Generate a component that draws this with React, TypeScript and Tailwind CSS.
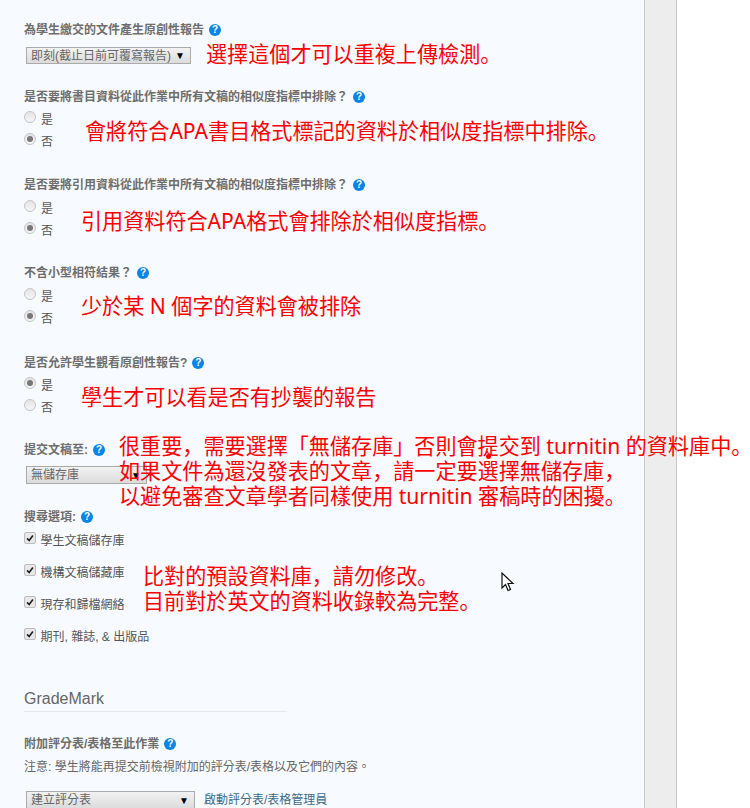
import React from "react";

const font = { fontFamily: '"Liberation Sans", "Noto Sans CJK TC", sans-serif' };
const noteFont = { fontFamily: '"Noto Sans", "Noto Sans CJK SC", sans-serif' };

function Help() {
  return (
    <span className="inline-flex h-3 w-3 shrink-0 items-center justify-center rounded-full bg-[#0a84e8] text-[10px] leading-none font-bold text-white">?</span>
  );
}

function Label({ children, className = "" }: { children: React.ReactNode; className?: string }) {
  return (
    <div className={"flex h-4 items-center gap-[5px] text-[12px] leading-4 font-bold text-[#6e6e6e] " + className}>
      <span>{children}</span>
      <Help />
    </div>
  );
}

function Radio({ text, on, className = "" }: { text: string; on?: boolean; className?: string }) {
  return (
    <div className={"flex h-4 items-center text-[12px] text-[#555] " + className}>
      <span className="flex h-3 w-3 items-center justify-center rounded-full border border-[#c4c4c4] bg-gradient-to-b from-[#e4e4e4] to-[#f6f6f6]">
        {on && <span className="h-1.5 w-1.5 rounded-full bg-[#777]" />}
      </span>
      <span className="ml-[5px] mt-[6px]">{text}</span>
    </div>
  );
}

function Check({ text, className = "" }: { text: string; className?: string }) {
  return (
    <div className={"flex h-4 items-center text-[12px] text-[#555] " + className}>
      <span className="flex h-3 w-3 items-center justify-center rounded-[2px] border border-[#bbb] bg-[#e8e8e8]">
        <svg viewBox="0 0 12 12" className="h-[10px] w-[10px]"><path d="M2.5 6.5 L5 9 L9.5 3" fill="none" stroke="#222" strokeWidth="2" /></svg>
      </span>
      <span className="ml-[4.5px] mt-[5px]">{text}</span>
    </div>
  );
}

function Select({ text, className }: { text: string; className: string }) {
  return (
    <div className={"ml-[2px] flex items-center justify-between border border-[#aaa] bg-gradient-to-b from-[#f2f2f2] to-[#dcdcdc] pl-[4px] pr-[5px] text-[12px] text-[#666] " + className}>
      <span>{text}</span>
      <span className="text-[10px] text-black">▼</span>
    </div>
  );
}

function Note({ children, className }: { children: React.ReactNode; className: string }) {
  return <div style={noteFont} className={"absolute whitespace-nowrap text-[21.1px] text-[#f00] " + className}>{children}</div>;
}

export default function App() {
  return (
    <div className="relative flex h-[808px] w-[750px] overflow-hidden bg-white" style={font}>
      <div className="h-full w-[644px] bg-[#f7fbff] pl-6 pt-[22px]">
        <Label>為學生繳交的文件產生原創性報告</Label>
        <Select text="即刻(截止日前可覆寫報告)" className="mt-[9px] h-[17px] w-[165px]" />

        <Label className="mt-[25px]">是否要將書目資料從此作業中所有文稿的相似度指標中排除？</Label>
        <Radio text="是" className="mt-[4px]" />
        <Radio text="否" on className="mt-[6px]" />

        <Label className="mt-[30px]">是否要將引用資料從此作業中所有文稿的相似度指標中排除？</Label>
        <Radio text="是" className="mt-[5px]" />
        <Radio text="否" on className="mt-[6px]" />

        <Label className="mt-[29px]">不含小型相符結果？</Label>
        <Radio text="是" className="mt-[5px]" />
        <Radio text="否" on className="mt-[6px]" />

        <Label className="mt-[31px]">是否允許學生觀看原創性報告?</Label>
        <Radio text="是" on className="mt-[4px]" />
        <Radio text="否" className="mt-[6px]" />

        <Label className="mt-[29px]">提交文稿至:</Label>
        <Select text="無儲存庫" className="mt-[8px] h-[18px] w-[121px]" />

        <Label className="mt-[25px]">搜尋選項:</Label>
        <Check text="學生文稿儲存庫" className="mt-[5px]" />
        <Check text="機構文稿儲藏庫" className="mt-4" />
        <Check text="現存和歸檔網絡" className="mt-4" />
        <Check text="期刊, 雜誌, & 出版品" className="mt-4" />

        <div className="mt-[46px] w-[263px] border-b border-[#e6e9ec] pb-[1px] text-[16px] leading-[22px] text-[#666]">GradeMark</div>

        <Label className="mt-6">附加評分表/表格至此作業</Label>
        <div className="mt-[7px] text-[12px] leading-4 text-[#666]">注意: 學生將能再提交前檢視附加的評分表/表格以及它們的內容。</div>
        <div className="mt-[16px] flex items-center">
          <Select text="建立評分表" className="h-[18px] w-[169px]" />
          <span className="ml-[9px] text-[12px] text-[#3a6a8c]">啟動評分表/表格管理員</span>
        </div>
      </div>
      <div className="h-full w-[33px] border-x border-[#c8c8c8] bg-[#ededed]" />

      <Note className="left-[206px] top-[39px] leading-[30px]">選擇這個才可以重複上傳檢測。</Note>
      <Note className="left-[85px] top-[116px] leading-[30px]">會將符合APA書目格式標記的資料於相似度指標中排除。</Note>
      <Note className="left-[81px] top-[206px] leading-[30px]">引用資料符合APA格式會排除於相似度指標。</Note>
      <Note className="left-[81px] top-[291px] leading-[30px]">少於某 N 個字的資料會被排除</Note>
      <Note className="left-[81px] top-[382px] leading-[30px]">學生才可以看是否有抄襲的報告</Note>
      <Note className="left-[119px] top-[433px] leading-[25px]">
        <div>很重要，需要選擇「無儲存庫」否則會提交到 turnitin 的資料庫中。</div>
        <div>如果文件為還沒發表的文章，請一定要選擇無儲存庫，</div>
        <div>以避免審查文章學者同樣使用 turnitin 審稿時的困擾。</div>
      </Note>
      <Note className="left-[143px] top-[563px] leading-[25px]">
        <div>比對的預設資料庫，請勿修改。</div>
        <div>目前對於英文的資料收錄較為完整。</div>
      </Note>
      <span className="absolute left-[486px] top-[454px] h-[5px] w-[5px] rounded-full bg-[#f00]" />
      <svg className="absolute left-[501px] top-[572px]" width="14" height="21" viewBox="0 0 14 21">
        <path d="M1 1 L1 16 L4.5 12.5 L7 18.5 L9.5 17.5 L7 11.5 L12 11.5 Z" fill="#fff" stroke="#111" strokeWidth="1.2" />
      </svg>
    </div>
  );
}
